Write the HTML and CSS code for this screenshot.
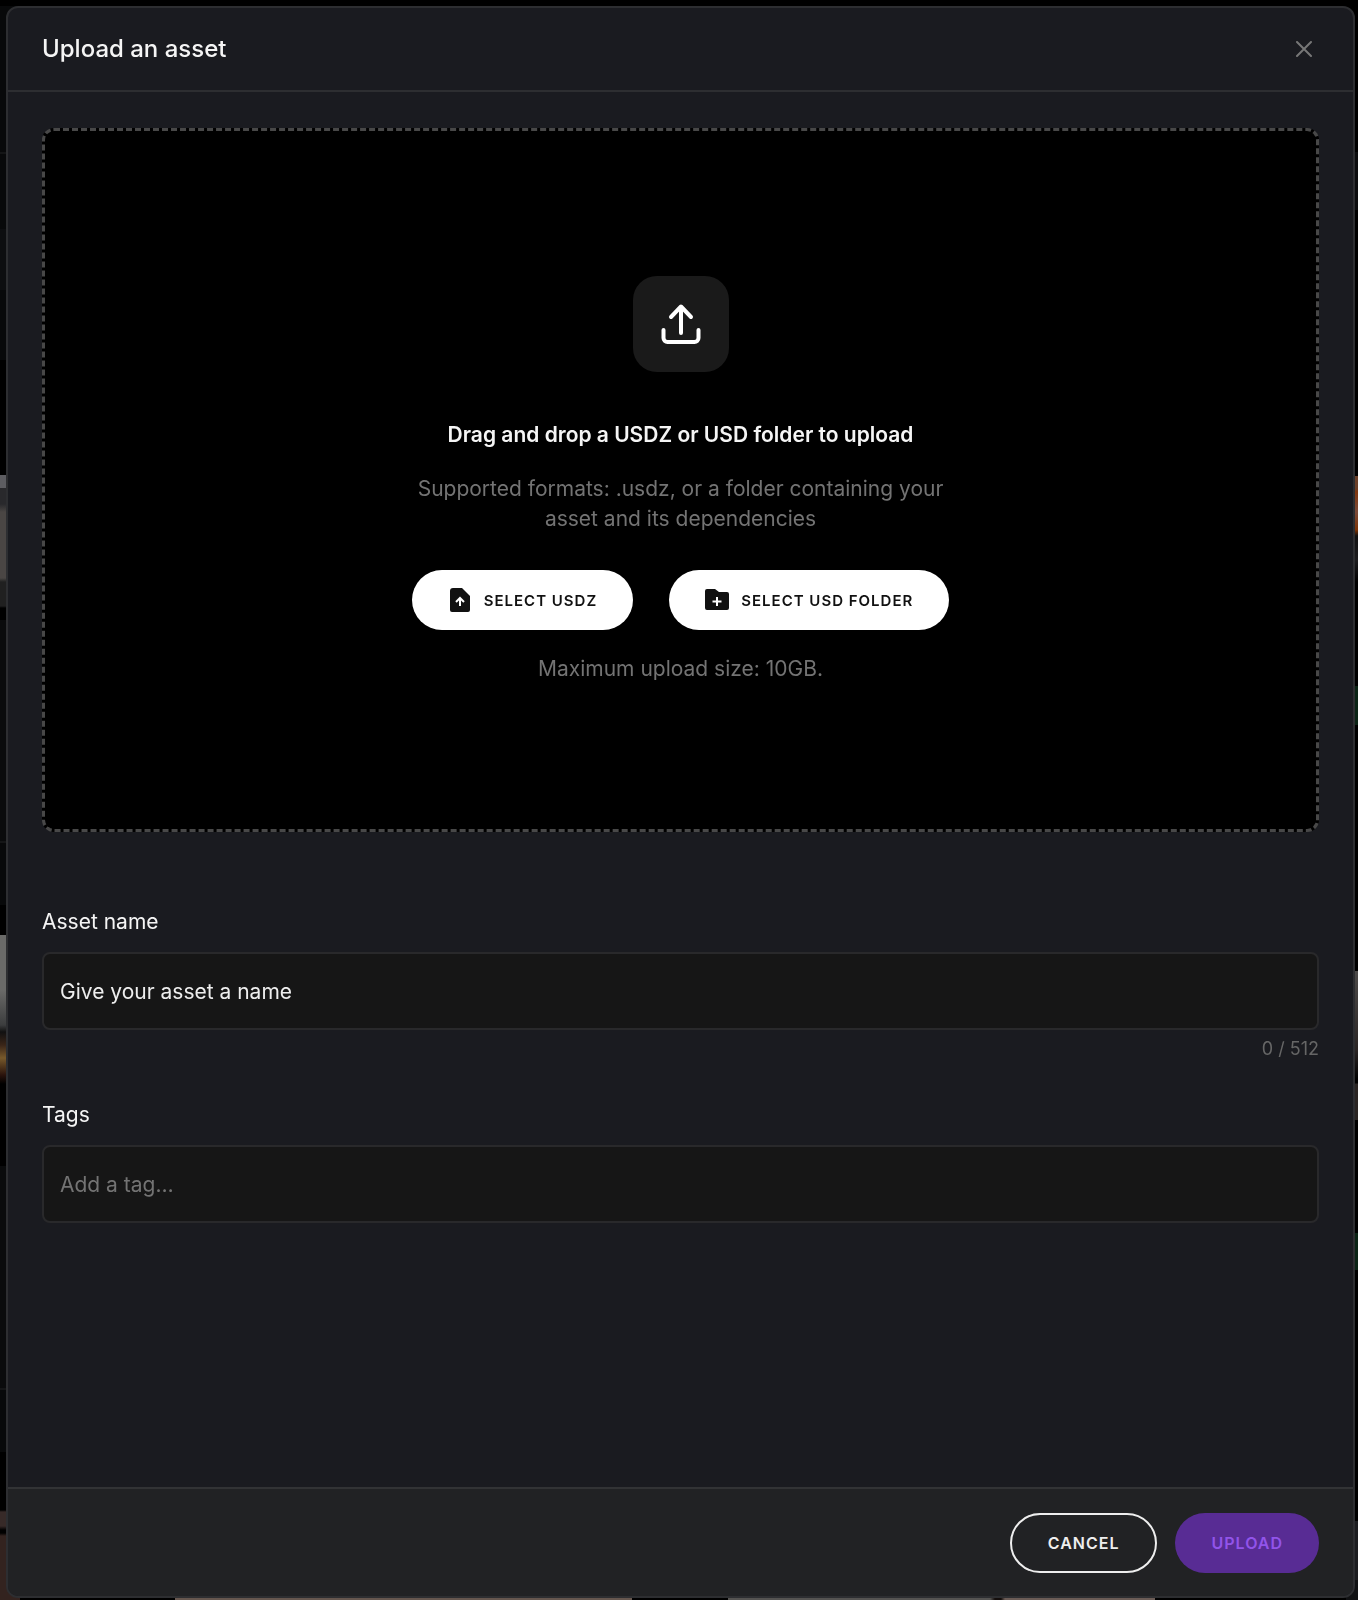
FILE: index.html
```
<!DOCTYPE html>
<html lang="en">
<head>
  <meta charset="UTF-8" />
  <meta name="viewport" content="width=device-width, initial-scale=1.0" />
  <title>Upload an asset</title>
  <link rel="stylesheet" href="styles.css">
</head>
<body>
  <!-- dimmed page behind the dialog -->
  <div class="backdrop" aria-hidden="true">
    <div class="edge edge-left"></div>
    <div class="edge edge-right"></div>
    <div class="edge edge-bottom"></div>
  </div>

  <form class="modal" role="dialog" aria-labelledby="modal-title">
    <header class="modal-header">
      <h1 id="modal-title">Upload an asset</h1>
      <button type="button" class="close" aria-label="Close">
        <svg width="16" height="16" viewBox="0 0 16 16" fill="none" stroke="currentColor" stroke-width="2" stroke-linecap="round">
          <path d="M1 1l14 14M15 1L1 15" />
        </svg>
      </button>
    </header>

    <main class="modal-body">
      <section class="dropzone">
        <div class="drop-icon">
          <svg width="40" height="42" viewBox="0 0 40 42" fill="none" stroke="currentColor" stroke-width="4" stroke-linecap="round" stroke-linejoin="round">
            <path d="M20 30V4M10 14L20 3.500 30 14" />
            <path d="M2.500 27v8a4 4 0 0 0 4 4h27a4 4 0 0 0 4-4v-8" />
          </svg>
        </div>
        <h2>Drag and drop a USDZ or USD folder to upload</h2>
        <p class="formats">Supported formats: .usdz, or a folder containing your asset and its dependencies</p>
        <div class="pick">
          <button type="button" class="btn btn-light">
            <svg width="24" height="24" viewBox="0 0 24 24">
              <path fill="currentColor" d="M5 0h9l8 8v14a2 2 0 0 1-2 2H4a2 2 0 0 1-2-2V3a3 3 0 0 1 3-3z" />
              <path fill="none" stroke="#fff" stroke-width="2" d="M12 18v-7M8 14l4-4 4 4" />
            </svg>
            Select USDZ
          </button>
          <button type="button" class="btn btn-light">
            <svg width="24" height="24" viewBox="0 0 24 24">
              <path fill="currentColor" d="M2 1h8l4 3h8a2 2 0 0 1 2 2v14a2 2 0 0 1-2 2H2a2 2 0 0 1-2-2V3a2 2 0 0 1 2-2z" />
              <path fill="none" stroke="#fff" stroke-width="2" d="M12 9v9M7.500 13.500h9" />
            </svg>
            Select USD folder
          </button>
        </div>
        <p class="limit">Maximum upload size: 10GB.</p>
      </section>

      <div class="field">
        <label for="asset-name">Asset name</label>
        <input type="text" id="asset-name" class="name-input" maxlength="512" placeholder="Give your asset a name" />
        <div class="counter">0 / 512</div>
      </div>

      <div class="field">
        <label for="tags">Tags</label>
        <input type="text" id="tags" placeholder="Add a tag…" />
      </div>
    </main>

    <footer class="modal-footer">
      <button type="button" class="btn btn-outline">Cancel</button>
      <button type="submit" class="btn btn-primary" disabled>Upload</button>
    </footer>
  </form>
</body>
</html>
```
FILE: styles.css
```
:root {
  --panel: #1a1b20;
  --footer: #212224;
  --field: #161616;
  --line: #2d2e31;
  --text: #f5f5f5;
  --muted: #737373;
}

* {
  box-sizing: border-box;
}

body {
  margin: 0;
  min-height: 100vh;
  display: flex;
  padding: 6px 3px 2px 6px;
  background: #000;
  color: var(--text);
  font-family: Inter, "Liberation Sans", sans-serif;
  font-size: 21px;
  line-height: 30px;
}

h1, h2, p {
  margin: 0;
}

svg {
  display: block;
}

button, input {
  font-family: inherit;
}

/* slivers of the page that show round the dialog */
.backdrop {
  position: fixed;
  inset: 0;
}

.edge {
  position: absolute;
}

.edge-left {
  top: 0;
  bottom: 0;
  left: 0;
  width: 20px;
  background: linear-gradient(
    #000 6px, #08090a 6px 152px, #141516 152px 154px,
    #08090a 154px 229px, #0d0e10 229px 290px, #08090a 290px 360px,
    #000 360px 475px, #5d5d61 475px 488px, #29292c 488px 504px,
    #4a4644 512px 578px, #202020 582px 606px, #000 608px 620px,
    #0a0b0c 620px 841px, #151617 841px 843px, #08090a 843px 905px,
    #000 905px 935px, #6a6a68 935px 990px, #3c3d3e 1025px, #111 1032px,
    #3a2518 1045px, #77592b 1058px, #2a130c 1075px, #000 1084px 1166px,
    #0a0b0c 1166px 1388px, #151617 1388px 1390px, #08090a 1390px 1452px,
    #000 1452px 1510px, #372a28 1512px 1526px, #000 1530px 1533px,
    #33231f 1536px
  );
}

.edge-right {
  top: 0;
  bottom: 0;
  right: 0;
  width: 12px;
  background: linear-gradient(
    #000 152px, #0c0d0e 152px 210px, #000 210px 476px,
    #6b4029 476px 488px, #80370f 492px, #7a4a38 512px, #7d3305 530px,
    #111 536px, #1c1c1e 560px, #000 582px 686px,
    #0b2415 686px 725px, #000 725px 971px,
    #4c4a49 971px, #2a2524 1050px, #000 1080px 1083px, #2a2523 1084px 1120px,
    #000 1120px 1233px, #0b2415 1233px 1270px,
    #000 1270px 1521px, #1c1d20 1521px 1580px, #101113 1580px
  );
}

.edge-bottom {
  bottom: 0;
  left: 175px;
  width: 980px;
  height: 12px;
  background: linear-gradient(
    90deg,
    #66574f 457px, #000 457px 553px, #555452 553px 815px,
    #140e0c 820px 826px, #6b5c56 830px
  );
}

.modal {
  position: relative;
  flex: 1;
  display: flex;
  flex-direction: column;
  background: var(--panel);
  border: 2px solid var(--line);
  border-radius: 12px;
  overflow: hidden;
}

.modal-header {
  display: flex;
  align-items: center;
  justify-content: space-between;
  height: 84px;
  padding: 0 34px;
  border-bottom: 2px solid var(--line);
}

.modal-header h1 {
  font-size: 24px;
  font-weight: 500;
}

.close {
  padding: 7px;
  border: none;
  background: none;
  color: #777;
  cursor: pointer;
}

.modal-body {
  flex: 1;
  padding: 36px 34px;
}

.dropzone {
  display: flex;
  flex-direction: column;
  align-items: center;
  justify-content: center;
  height: 704px;
  margin-bottom: 75px;
  background: #000;
  border: 3px dashed #484848;
  border-radius: 12px;
  text-align: center;
}

.drop-icon {
  display: flex;
  align-items: center;
  justify-content: center;
  width: 96px;
  height: 96px;
  margin-bottom: 48px;
  border-radius: 24px;
  background: #1a1a1a;
  color: #fff;
}

.dropzone h2 {
  margin-bottom: 24px;
  font-size: 21px;
  font-weight: 600;
}

.formats {
  max-width: 560px;
  margin-bottom: 36px;
  color: var(--muted);
}

.pick {
  display: flex;
  gap: 36px;
  margin-bottom: 24px;
}

.limit {
  color: var(--muted);
}

.btn {
  display: flex;
  align-items: center;
  justify-content: center;
  gap: 12px;
  height: 60px;
  padding: 0 36px;
  border: none;
  border-radius: 30px;
  font-size: 16px;
  font-weight: 600;
  letter-spacing: 1px;
  text-transform: uppercase;
  cursor: pointer;
}

.btn-light {
  background: #fff;
  color: #111;
  font-size: 15px;
}

.btn-outline {
  border: 2px solid #eee;
  background: none;
  color: #eee;
}

.btn-primary {
  background: #582c94;
  color: #9254ea;
}

.field {
  margin-bottom: 36px;
}

.field label {
  display: block;
  margin-bottom: 15px;
}

.field input {
  display: block;
  width: 100%;
  height: 78px;
  padding: 0 16px;
  border: 2px solid #29292b;
  border-radius: 8px;
  background: var(--field);
  color: var(--text);
  font-size: 21px;
}

.field input::placeholder {
  color: var(--muted);
  opacity: 1;
}

.field .name-input::placeholder {
  color: #eee;
}

.counter {
  margin-top: 4px;
  color: #666;
  font-size: 18px;
  text-align: right;
}

.modal-footer {
  display: flex;
  align-items: center;
  justify-content: flex-end;
  gap: 18px;
  height: 109px;
  padding: 0 34px;
  border-top: 2px solid #323335;
  background: var(--footer);
}
```
